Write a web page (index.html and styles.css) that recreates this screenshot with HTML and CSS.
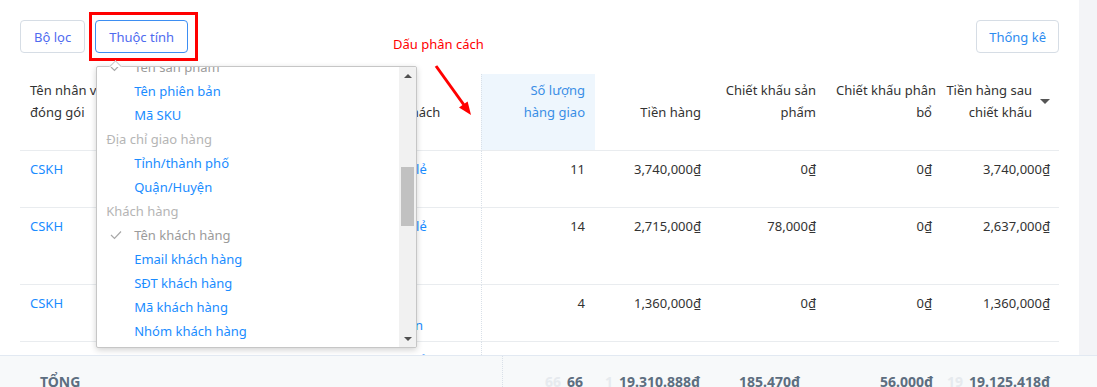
FILE: index.html
```html
<!DOCTYPE html>
<html lang="vi">

<head>
  <meta charset="UTF-8" />
  <title>Báo cáo đóng gói</title>

  <link rel="stylesheet" href="styles.css">
</head>

<body>
  <div class="trang">
    <div class="tren">
      <div class="noidung">
        <div class="thanh-cong-cu">
          <div class="nhom-nut">
            <button class="nut nut-loc">Bộ lọc</button>
            <div class="thuoc-tinh">
              <button class="nut nut-chon">Thuộc tính</button>
              <div class="menu">
                <div class="menu-ds">
                  <div class="muc da-chon"><svg class="dau-tick" viewBox="0 0 12 10"><polyline points="1,5 4.5,8.5 11,1.5" /></svg>Tên sản phẩm</div>
                  <div class="muc">Tên phiên bản</div>
                  <div class="muc">Mã SKU</div>
                  <div class="nhom">Địa chỉ giao hàng</div>
                  <div class="muc">Tỉnh/thành phố</div>
                  <div class="muc">Quận/Huyện</div>
                  <div class="nhom">Khách hàng</div>
                  <div class="muc da-chon"><svg class="dau-tick" viewBox="0 0 12 10"><polyline points="1,5 4.5,8.5 11,1.5" /></svg>Tên khách hàng</div>
                  <div class="muc">Email khách hàng</div>
                  <div class="muc">SĐT khách hàng</div>
                  <div class="muc">Mã khách hàng</div>
                  <div class="muc">Nhóm khách hàng</div>
                  <div class="muc">Địa chỉ khách hàng</div>
                </div>
                <div class="cuon">
                  <div class="cuon-nut"><span class="tg-len"></span></div>
                  <div class="ray"><div class="con-truot"></div></div>
                  <div class="cuon-nut"><span class="tg-xuong"></span></div>
                </div>
              </div>
            </div>
          </div>
          <button class="nut">Thống kê</button>
        </div>

        <span class="ghi-chu">Dấu phân cách</span>
        <svg class="mui-ten" viewBox="0 0 55 60" width="55" height="60">
          <line x1="11" y1="6" x2="39" y2="45" />
          <polygon points="46,55 34,47.5 42.6,41.5" />
        </svg>

        <table class="bang">
          <colgroup>
            <col style="width: 345px">
            <col style="width: 116px">
            <col style="width: 114px">
            <col style="width: 116px">
            <col style="width: 115px">
            <col style="width: 116px">
            <col style="width: 117px">
          </colgroup>
          <thead>
            <tr>
              <th class="trai">Tên nhân viên<br>đóng gói</th>
              <th class="trai">Loại khách</th>
              <th class="cham sap-xep">Số lượng<br>hàng giao</th>
              <th>Tiền hàng</th>
              <th>Chiết khấu sản<br>phẩm</th>
              <th>Chiết khấu phân<br>bổ</th>
              <th class="cot-cuoi">
                <div class="tieu-de-cuoi"><span>Tiền hàng sau<br>chiết khấu</span><i class="tam-giac"></i></div>
              </th>
            </tr>
          </thead>
          <tbody>
            <tr class="dong-thap">
              <td class="trai"><a href="#">CSKH</a></td>
              <td class="trai"><a href="#">Khách lẻ</a></td>
              <td class="cham">11</td>
              <td>3,740,000₫</td>
              <td>0₫</td>
              <td>0₫</td>
              <td class="cot-cuoi">3,740,000₫</td>
            </tr>
            <tr class="dong-cao">
              <td class="trai"><a href="#">CSKH</a></td>
              <td class="trai"><a href="#">Khách lẻ</a></td>
              <td class="cham">14</td>
              <td>2,715,000₫</td>
              <td>78,000₫</td>
              <td>0₫</td>
              <td class="cot-cuoi">2,637,000₫</td>
            </tr>
            <tr class="dong-thap">
              <td class="trai"><a href="#">CSKH</a></td>
              <td class="trai"><a href="#">Khách<br>hội viên</a></td>
              <td class="cham">4</td>
              <td>1,360,000₫</td>
              <td>0₫</td>
              <td>0₫</td>
              <td class="cot-cuoi">1,360,000₫</td>
            </tr>
            <tr class="dong-thap">
              <td class="trai"><a href="#">CSKH</a></td>
              <td class="trai"><a href="#">Khách lẻ</a></td>
              <td class="cham">9</td>
              <td>2,480,000₫</td>
              <td>0₫</td>
              <td>0₫</td>
              <td class="cot-cuoi">2,480,000₫</td>
            </tr>
          </tbody>
        </table>
      </div>
      <div class="le-phai"></div>
    </div>

    <div class="tong">
      <div class="tong-nhan">TỔNG</div>
      <div class="tong-o o1"><span class="mo">66</span>66</div>
      <div class="tong-o o2"><span class="mo">1</span>19.310.888đ</div>
      <div class="tong-o o3">185.470đ</div>
      <div class="tong-o o4">56.000đ</div>
      <div class="tong-o o5"><span class="mo">19</span>19.125.418đ</div>
    </div>
  </div>
</body>

</html>
```

FILE: styles.css
```css
body {
  margin: 0;
  font-family: "Segoe UI", "Noto Sans", sans-serif;
  font-size: 13px;
  line-height: 22px;
  color: #333;
  background: #fff;
}

.trang {
  height: 387px;
  overflow: hidden;
  display: flex;
  flex-direction: column;
}

.tren {
  height: 355px;
  flex-shrink: 0;
  display: flex;
  overflow: hidden;
}

.noidung {
  flex: 1;
  position: relative;
  padding: 20px 20px 0;
}

.le-phai {
  width: 18px;
  background: #f3f4f7;
}

/* thanh nut phia tren */

.thanh-cong-cu {
  display: flex;
  justify-content: space-between;
  align-items: flex-start;
}

.nhom-nut {
  display: flex;
  gap: 10px;
}

.nut {
  height: 33px;
  padding: 0 12px;
  border: 1px solid #d6dde5;
  border-radius: 4px;
  background: #fff;
  font-family: inherit;
  font-size: 13px;
  color: #2d8cf0;
}

.nhom-nut .nut {
  color: #4f6bef;
}

.nhom-nut .nut-loc {
  padding: 0 13px;
}

.nut-chon {
  border-color: #3d8ef2;
  padding: 0 13px;
}

.thuoc-tinh {
  position: relative;
}

/* khung do danh dau */
.thuoc-tinh::after {
  content: "";
  position: absolute;
  top: -8px;
  left: -6px;
  right: -10px;
  bottom: -8px;
  border: 3px solid #f00;
  pointer-events: none;
}

/* menu thuoc tinh */

.menu {
  position: absolute;
  top: 46px;
  left: 1px;
  z-index: 5;
  width: 321px;
  height: 282px;
  box-sizing: border-box;
  display: flex;
  background: #fff;
  border: 1px solid #c6c6c6;
  border-radius: 2px;
  box-shadow: 0 2px 6px rgba(0, 0, 0, 0.18);
}

.menu::before {
  content: "";
  position: absolute;
  top: -5px;
  left: 14px;
  width: 8px;
  height: 8px;
  background: #fff;
  border-top: 1px solid #c6c6c6;
  border-left: 1px solid #c6c6c6;
  transform: rotate(45deg);
}

.menu-ds {
  flex: 1;
  overflow: hidden;
  position: relative;
  z-index: 1;
}

.menu-ds > div:first-child {
  margin-top: -12px;
}

.muc,
.nhom {
  line-height: 24px;
  white-space: nowrap;
}

.muc {
  padding-left: 37px;
  color: #1a8cff;
}

.nhom {
  padding-left: 9px;
  color: #b5b5b5;
}

.muc.da-chon {
  padding-left: 13px;
  color: #9b9b9b;
}

.dau-tick {
  width: 12px;
  height: 10px;
  margin-right: 12px;
  fill: none;
  stroke: #a8a8a8;
  stroke-width: 1.2;
}

.cuon {
  width: 17px;
  display: flex;
  flex-direction: column;
  background: #f1f1f1;
  border-radius: 0 2px 2px 0;
}

.cuon-nut {
  height: 17px;
  display: flex;
  align-items: center;
  justify-content: center;
}

.tg-len {
  border-left: 4px solid transparent;
  border-right: 4px solid transparent;
  border-bottom: 4px solid #505050;
}

.tg-xuong {
  border-left: 4px solid transparent;
  border-right: 4px solid transparent;
  border-top: 4px solid #505050;
}

.ray {
  flex: 1;
}

.con-truot {
  margin: 83px 2px 0;
  height: 59px;
  background: #c1c1c1;
}

/* ghi chu mau do */

.ghi-chu {
  position: absolute;
  top: 33px;
  left: 393px;
  color: #f00;
  font-size: 13px;
}

.mui-ten {
  position: absolute;
  top: 60px;
  left: 425px;
  z-index: 3;
}

.mui-ten line {
  stroke: #f00;
  stroke-width: 3;
}

.mui-ten polygon {
  fill: #f00;
}

/* bang */

.bang {
  margin-top: 21px;
  width: 1039px;
  table-layout: fixed;
  border-collapse: separate;
  border-spacing: 0;
}

.bang th,
.bang td {
  padding: 7px 10px 0;
  text-align: right;
  border-bottom: 1px solid #e9ecef;
  white-space: nowrap;
  overflow: hidden;
}

.bang th {
  font-weight: normal;
  vertical-align: bottom;
  padding-top: 5px;
  padding-bottom: 27px;
  color: #333;
}

.bang td {
  vertical-align: top;
}

.bang .trai {
  text-align: left;
}

.bang .cham {
  border-left: 1px dotted #d9e0e8;
}

.bang th.sap-xep {
  background: #eef6fd;
  color: #3a8ee6;
}

.bang .cot-cuoi {
  padding-right: 9px;
}

.tieu-de-cuoi {
  display: flex;
  justify-content: flex-end;
  align-items: center;
}

.tam-giac {
  margin-left: 8px;
  border-left: 5px solid transparent;
  border-right: 5px solid transparent;
  border-top: 5px solid #555;
}

.dong-thap {
  height: 57px;
}

.dong-cao {
  height: 77px;
}

a {
  color: #1a8cff;
  text-decoration: none;
}

/* dong tong */

.tong {
  flex: 1;
  display: flex;
  background: #f7f9fa;
  border-top: 1px solid #e2e9f2;
  font-weight: bold;
  font-size: 14px;
  color: #5d6e80;
  padding-top: 15px;
}

.tong-nhan {
  width: 502px;
  box-sizing: border-box;
  padding-left: 40px;
}

.tong-o {
  box-sizing: border-box;
  padding-right: 10px;
  text-align: right;
  white-space: nowrap;
}

.o1 {
  width: 91px;
  border-left: 1px dotted #d9e0e8;
  margin-top: -15px;
  padding-top: 15px;
}

.o2 {
  width: 117px;
}

.o3 {
  width: 100px;
}

.o4 {
  width: 133px;
}

.o5 {
  width: 117px;
}

.mo {
  color: #e6eaee;
  margin-right: 6px;
}
```
